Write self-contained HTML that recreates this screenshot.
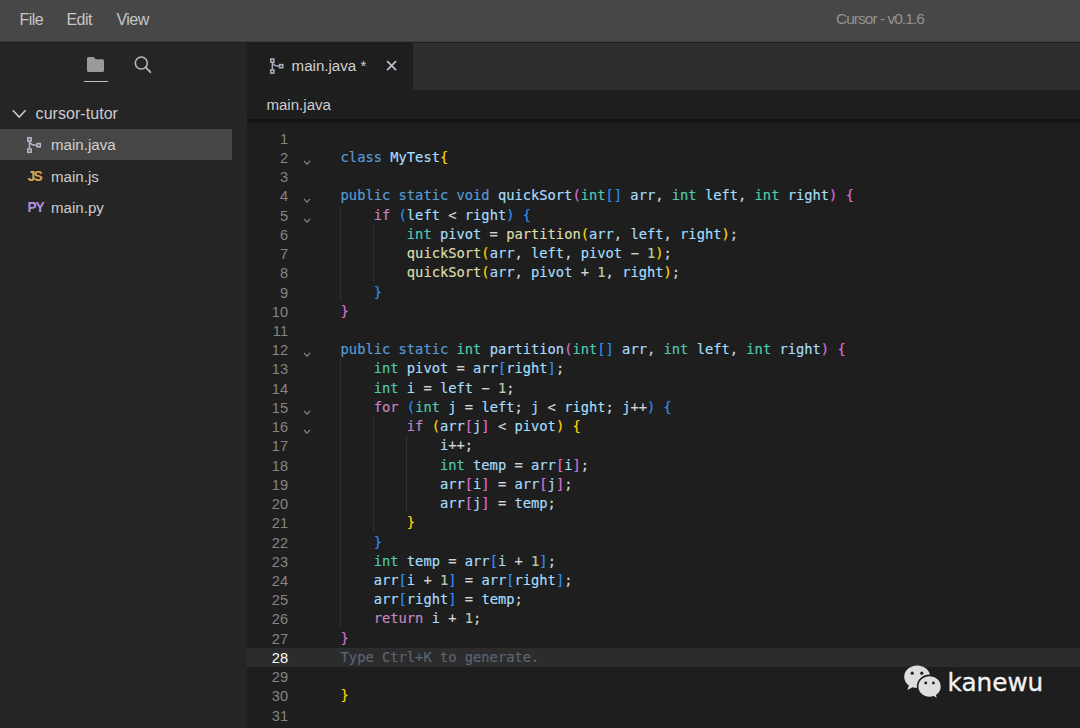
<!DOCTYPE html>
<html lang="en"><head><meta charset="utf-8"><title>Cursor - v0.1.6</title>
<style>
html,body{margin:0;padding:0;background:#1e1e1e;}
body{width:1080px;height:728px;position:relative;overflow:hidden;font-family:"Liberation Sans","DejaVu Sans",sans-serif;color:#ccc;}
.abs{position:absolute;}
#title{left:0;top:0;width:1080px;height:41.4px;background:#474747;border-bottom:1.1px solid #3a3e45;}
#side{left:0;top:42.5px;width:247px;height:686px;background:#252526;}
#tabs{left:247px;top:42.5px;width:833px;height:47.5px;background:#2d2d2d;}
#tab{left:247px;top:42.5px;width:166px;height:47.5px;background:#1e1e1e;}
#crumb{left:247px;top:90px;width:833px;height:29px;background:#1e1e1e;}
.t{position:absolute;white-space:pre;line-height:20px;}
.menu{font-size:16px;color:#c6c6c6;top:9.8px;letter-spacing:-0.55px;}
#sel{left:0;top:129px;width:232px;height:31px;background:#464646;}
#actline{left:247px;top:647.91px;width:833px;height:19px;background:#2c2c2c;}
.ln{position:absolute;left:247px;width:41.0px;text-align:right;height:19.23px;line-height:19.23px;font-size:14.6px;color:#858585;transform:translateY(1.1px);}
.ln.act{color:#fff;}
.cl{position:absolute;left:340.6px;height:19.23px;line-height:19.23px;white-space:pre;font-family:"DejaVu Sans Mono","Liberation Mono",monospace;font-size:13.75px;color:#d4d4d4;transform:translateY(0.0px);-webkit-text-stroke:0.18px currentColor;}
.k{color:#569cd6} .ty{color:#4ec9b0} .c{color:#c586c0} .n{color:#b5cea8} .v{color:#a6dcfb} .f{color:#dcdcaa} .o{color:#d4d4d4}
.b1{color:#ffd700} .b2{color:#da70d6} .b3{color:#2f8ff0} .ph{color:#5b6573}
.fold{position:absolute;left:303px;} .fold path{fill:none;stroke:#8a8a8a;stroke-width:1.2}
.guide{position:absolute;width:0;border-left:1px dotted #3e3e3e;}
svg{display:block;overflow:visible}
</style></head><body>
<div id="title" class="abs"></div>
<div class="t menu" style="left:19.5px">File</div>
<div class="t menu" style="left:66.5px">Edit</div>
<div class="t menu" style="left:116.5px">View</div>
<div class="t" style="left:836px;top:8.6px;font-size:15.5px;color:#929292;letter-spacing:-0.98px">Cursor - v0.1.6</div>

<div id="side" class="abs"></div>
<svg class="abs" style="left:87px;top:57px" width="17" height="15" viewBox="0 0 17 15"><path d="M1.6 0 H6.6 L8.8 2.3 H15.4 Q17 2.3 17 3.9 V13.4 Q17 15 15.4 15 H1.6 Q0 15 0 13.4 V1.6 Q0 0 1.6 0 Z" fill="#9a9a9a"/></svg>
<div class="abs" style="left:84px;top:80.8px;width:23.6px;height:1.2px;background:#c0c0c0"></div>
<svg class="abs" style="left:133px;top:55px" width="20" height="20" viewBox="0 0 20 20"><circle cx="8.3" cy="8" r="6" fill="none" stroke="#b8b8b8" stroke-width="1.6"/><path d="M12.6 12.3 L17.4 17.2" stroke="#b8b8b8" stroke-width="1.8" stroke-linecap="round"/></svg>

<svg class="abs" style="left:12px;top:109px" width="15" height="10" viewBox="0 0 15 10"><path d="M0.8 1.2 L7.2 8 L13.6 1.2" fill="none" stroke="#c8c8c8" stroke-width="1.6"/></svg>
<div class="t" style="left:35.6px;top:103.6px;font-size:16px;color:#ccc;letter-spacing:0.05px">cursor-tutor</div>
<div id="sel" class="abs"></div>
<svg class="abs" style="left:26px;top:135.8px" width="17" height="18" viewBox="0 0 17 18" stroke="#b3b8c6"><path d="M3.45 5.6 V12.6 M3.7 5.6 C4.2 8.5 6.6 9.2 10.4 9.2" fill="none" stroke-width="1.5"/><rect x="1.8" y="1.8" width="3.3" height="3.2" fill="none" stroke-width="1.6"/><rect x="1.8" y="13.1" width="3.3" height="3.2" fill="none" stroke-width="1.6"/><rect x="11" y="7.6" width="3.3" height="3.2" fill="none" stroke-width="1.6"/></svg>
<div class="t" style="left:51px;top:135.4px;font-size:15.1px;color:#d0d0d0">main.java</div>
<div class="t" style="left:27.4px;top:167.4px;font-size:13.8px;font-weight:bold;color:#d8a750;letter-spacing:-1.5px">JS</div>
<div class="t" style="left:51px;top:167px;font-size:15.1px;color:#ccc">main.js</div>
<div class="t" style="left:27.6px;top:198.4px;font-size:13.8px;font-weight:bold;color:#b48ede;letter-spacing:-1.4px">PY</div>
<div class="t" style="left:51px;top:198.4px;font-size:15.1px;color:#ccc">main.py</div>

<div id="tabs" class="abs"></div>
<div id="tab" class="abs"></div>
<svg class="abs" style="left:269.2px;top:57.4px" width="16.4" height="18" viewBox="0 0 17 18" stroke="#a9aebd"><path d="M3.45 5.6 V12.6 M3.7 5.6 C4.2 8.5 6.6 9.2 10.4 9.2" fill="none" stroke-width="1.5"/><rect x="1.8" y="1.8" width="3.3" height="3.2" fill="none" stroke-width="1.6"/><rect x="1.8" y="13.1" width="3.3" height="3.2" fill="none" stroke-width="1.6"/><rect x="11" y="7.6" width="3.3" height="3.2" fill="none" stroke-width="1.6"/></svg>
<div class="t" style="left:291.6px;top:55.6px;font-size:15.1px;color:#d0d0d0">main.java *</div>
<svg class="abs" style="left:386.3px;top:60.4px" width="11.2" height="11.2" viewBox="0 0 12 12"><path d="M1.2 1.2 L10.8 10.8 M10.8 1.2 L1.2 10.8" stroke="#bcc0ca" stroke-width="1.8"/></svg>
<div id="crumb" class="abs"></div>
<div class="t" style="left:266.4px;top:94.6px;font-size:15.1px;color:#ccc">main.java</div>
<div class="abs" style="left:247px;top:119px;width:833px;height:5px;background:linear-gradient(rgba(0,0,0,.5),rgba(0,0,0,0))"></div>

<div id="actline" class="abs"></div>
<div class="guide" style="left:340.2px;top:205.62px;height:94.95px"></div><div class="guide" style="left:340.2px;top:359.46px;height:268.02px"></div><div class="guide" style="left:373.3px;top:224.85px;height:56.49px"></div><div class="guide" style="left:373.3px;top:417.15px;height:114.18px"></div><div class="guide" style="left:406.4px;top:436.38px;height:75.72px"></div>
<div class="ln" style="top:128.70px">1</div>
<div class="ln" style="top:147.93px">2</div>
<svg class="fold" style="top:159.93px" width="8" height="5.4" viewBox="0 0 9 6"><path d="M1 1 L4.5 4.6 L8 1"/></svg>
<div class="cl" style="top:147.93px"><span class="k">class</span><span class="o"> </span><span class="v">MyTest</span><span class="b1">{</span></div>
<div class="ln" style="top:167.16px">3</div>
<div class="ln" style="top:186.39px">4</div>
<svg class="fold" style="top:198.39px" width="8" height="5.4" viewBox="0 0 9 6"><path d="M1 1 L4.5 4.6 L8 1"/></svg>
<div class="cl" style="top:186.39px"><span class="k">public static void</span><span class="o"> </span><span class="v">quickSort</span><span class="b2">(</span><span class="ty">int</span><span class="b3">[]</span><span class="v"> arr</span><span class="o">, </span><span class="ty">int</span><span class="v"> left</span><span class="o">, </span><span class="ty">int</span><span class="v"> right</span><span class="b2">)</span><span class="o"> </span><span class="b2">{</span></div>
<div class="ln" style="top:205.62px">5</div>
<svg class="fold" style="top:217.62px" width="8" height="5.4" viewBox="0 0 9 6"><path d="M1 1 L4.5 4.6 L8 1"/></svg>
<div class="cl" style="top:205.62px"><span class="o">    </span><span class="c">if</span><span class="o"> </span><span class="b3">(</span><span class="v">left</span><span class="o"> &lt; </span><span class="v">right</span><span class="b3">)</span><span class="o"> </span><span class="b3">{</span></div>
<div class="ln" style="top:224.85px">6</div>
<div class="cl" style="top:224.85px"><span class="o">        </span><span class="ty">int</span><span class="v"> pivot</span><span class="o"> = </span><span class="f">partition</span><span class="b1">(</span><span class="v">arr</span><span class="o">, </span><span class="v">left</span><span class="o">, </span><span class="v">right</span><span class="b1">)</span><span class="o">;</span></div>
<div class="ln" style="top:244.08px">7</div>
<div class="cl" style="top:244.08px"><span class="o">        </span><span class="f">quickSort</span><span class="b1">(</span><span class="v">arr</span><span class="o">, </span><span class="v">left</span><span class="o">, </span><span class="v">pivot</span><span class="o"> − </span><span class="n">1</span><span class="b1">)</span><span class="o">;</span></div>
<div class="ln" style="top:263.31px">8</div>
<div class="cl" style="top:263.31px"><span class="o">        </span><span class="f">quickSort</span><span class="b1">(</span><span class="v">arr</span><span class="o">, </span><span class="v">pivot</span><span class="o"> + </span><span class="n">1</span><span class="o">, </span><span class="v">right</span><span class="b1">)</span><span class="o">;</span></div>
<div class="ln" style="top:282.54px">9</div>
<div class="cl" style="top:282.54px"><span class="o">    </span><span class="b3">}</span></div>
<div class="ln" style="top:301.77px">10</div>
<div class="cl" style="top:301.77px"><span class="b2">}</span></div>
<div class="ln" style="top:321.00px">11</div>
<div class="ln" style="top:340.23px">12</div>
<svg class="fold" style="top:352.23px" width="8" height="5.4" viewBox="0 0 9 6"><path d="M1 1 L4.5 4.6 L8 1"/></svg>
<div class="cl" style="top:340.23px"><span class="k">public static</span><span class="o"> </span><span class="ty">int</span><span class="o"> </span><span class="v">partition</span><span class="b2">(</span><span class="ty">int</span><span class="b3">[]</span><span class="v"> arr</span><span class="o">, </span><span class="ty">int</span><span class="v"> left</span><span class="o">, </span><span class="ty">int</span><span class="v"> right</span><span class="b2">)</span><span class="o"> </span><span class="b2">{</span></div>
<div class="ln" style="top:359.46px">13</div>
<div class="cl" style="top:359.46px"><span class="o">    </span><span class="ty">int</span><span class="v"> pivot</span><span class="o"> = </span><span class="v">arr</span><span class="b3">[</span><span class="v">right</span><span class="b3">]</span><span class="o">;</span></div>
<div class="ln" style="top:378.69px">14</div>
<div class="cl" style="top:378.69px"><span class="o">    </span><span class="ty">int</span><span class="v"> i</span><span class="o"> = </span><span class="v">left</span><span class="o"> − </span><span class="n">1</span><span class="o">;</span></div>
<div class="ln" style="top:397.92px">15</div>
<svg class="fold" style="top:409.92px" width="8" height="5.4" viewBox="0 0 9 6"><path d="M1 1 L4.5 4.6 L8 1"/></svg>
<div class="cl" style="top:397.92px"><span class="o">    </span><span class="c">for</span><span class="o"> </span><span class="b3">(</span><span class="ty">int</span><span class="v"> j</span><span class="o"> = </span><span class="v">left</span><span class="o">; </span><span class="v">j</span><span class="o"> &lt; </span><span class="v">right</span><span class="o">; </span><span class="v">j</span><span class="o">++</span><span class="b3">)</span><span class="o"> </span><span class="b3">{</span></div>
<div class="ln" style="top:417.15px">16</div>
<svg class="fold" style="top:429.15px" width="8" height="5.4" viewBox="0 0 9 6"><path d="M1 1 L4.5 4.6 L8 1"/></svg>
<div class="cl" style="top:417.15px"><span class="o">        </span><span class="c">if</span><span class="o"> </span><span class="b1">(</span><span class="v">arr</span><span class="b2">[</span><span class="v">j</span><span class="b2">]</span><span class="o"> &lt; </span><span class="v">pivot</span><span class="b1">)</span><span class="o"> </span><span class="b1">{</span></div>
<div class="ln" style="top:436.38px">17</div>
<div class="cl" style="top:436.38px"><span class="o">            </span><span class="v">i</span><span class="o">++;</span></div>
<div class="ln" style="top:455.61px">18</div>
<div class="cl" style="top:455.61px"><span class="o">            </span><span class="ty">int</span><span class="v"> temp</span><span class="o"> = </span><span class="v">arr</span><span class="b2">[</span><span class="v">i</span><span class="b2">]</span><span class="o">;</span></div>
<div class="ln" style="top:474.84px">19</div>
<div class="cl" style="top:474.84px"><span class="o">            </span><span class="v">arr</span><span class="b2">[</span><span class="v">i</span><span class="b2">]</span><span class="o"> = </span><span class="v">arr</span><span class="b2">[</span><span class="v">j</span><span class="b2">]</span><span class="o">;</span></div>
<div class="ln" style="top:494.07px">20</div>
<div class="cl" style="top:494.07px"><span class="o">            </span><span class="v">arr</span><span class="b2">[</span><span class="v">j</span><span class="b2">]</span><span class="o"> = </span><span class="v">temp</span><span class="o">;</span></div>
<div class="ln" style="top:513.30px">21</div>
<div class="cl" style="top:513.30px"><span class="o">        </span><span class="b1">}</span></div>
<div class="ln" style="top:532.53px">22</div>
<div class="cl" style="top:532.53px"><span class="o">    </span><span class="b3">}</span></div>
<div class="ln" style="top:551.76px">23</div>
<div class="cl" style="top:551.76px"><span class="o">    </span><span class="ty">int</span><span class="v"> temp</span><span class="o"> = </span><span class="v">arr</span><span class="b3">[</span><span class="v">i</span><span class="o"> + </span><span class="n">1</span><span class="b3">]</span><span class="o">;</span></div>
<div class="ln" style="top:570.99px">24</div>
<div class="cl" style="top:570.99px"><span class="o">    </span><span class="v">arr</span><span class="b3">[</span><span class="v">i</span><span class="o"> + </span><span class="n">1</span><span class="b3">]</span><span class="o"> = </span><span class="v">arr</span><span class="b3">[</span><span class="v">right</span><span class="b3">]</span><span class="o">;</span></div>
<div class="ln" style="top:590.22px">25</div>
<div class="cl" style="top:590.22px"><span class="o">    </span><span class="v">arr</span><span class="b3">[</span><span class="v">right</span><span class="b3">]</span><span class="o"> = </span><span class="v">temp</span><span class="o">;</span></div>
<div class="ln" style="top:609.45px">26</div>
<div class="cl" style="top:609.45px"><span class="o">    </span><span class="c">return</span><span class="v"> i</span><span class="o"> + </span><span class="n">1</span><span class="o">;</span></div>
<div class="ln" style="top:628.68px">27</div>
<div class="cl" style="top:628.68px"><span class="b2">}</span></div>
<div class="ln act" style="top:647.91px">28</div>
<div class="cl" style="top:647.91px"><span class="ph">Type Ctrl+K to generate.</span></div>
<div class="ln" style="top:667.14px">29</div>
<div class="ln" style="top:686.37px">30</div>
<div class="cl" style="top:686.37px"><span class="b1">}</span></div>
<div class="ln" style="top:705.60px">31</div>

<svg class="abs" style="left:903px;top:664px" width="40" height="37.6" viewBox="0 0 40 36" preserveAspectRatio="none">
<path d="M14.2 1.5 C6.9 1.5 1.2 6.3 1.2 12.2 C1.2 15.6 3 18.5 5.9 20.5 L4.4 25 L9.6 22.2 C11 22.6 12.6 22.9 14.2 22.9 C21.4 22.9 27.2 18.1 27.2 12.2 C27.2 6.3 21.4 1.5 14.2 1.5 Z" fill="#dedede"/>
<path d="M26.6 10.9 C19.9 10.9 14.6 15.6 14.6 21.5 C14.6 27.4 19.9 32.1 26.6 32.1 C28 32.1 29.4 31.9 30.6 31.5 L35 34 L33.8 30 C36.6 28.1 38.5 25 38.5 21.5 C38.5 15.6 33.2 10.9 26.6 10.9 Z" fill="#dedede" stroke="#1e1e1e" stroke-width="1.6"/>
<circle cx="9.2" cy="8.8" r="1.6" fill="#1e1e1e"/><circle cx="18.8" cy="8.8" r="1.6" fill="#1e1e1e"/>
<circle cx="22.8" cy="18.2" r="1.4" fill="#1e1e1e"/><circle cx="30.4" cy="18.2" r="1.4" fill="#1e1e1e"/>
</svg>
<div class="t" style="left:947.6px;top:665.6px;font-size:24.7px;line-height:34px;color:#f2f2f2;-webkit-text-stroke:0.35px #f2f2f2;text-shadow:0 0 2px rgba(0,0,0,.6);font-family:'DejaVu Sans','Liberation Sans',sans-serif">kanewu</div>
</body></html>
